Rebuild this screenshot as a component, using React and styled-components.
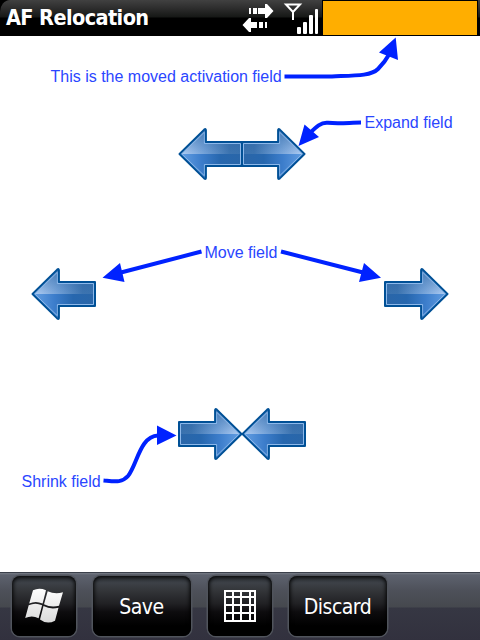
import React from 'react';
import styled, { createGlobalStyle } from 'styled-components';

const GlobalStyle = createGlobalStyle`
  * { box-sizing: border-box; }
  body { margin: 0; background: #fff; }
`;

const Screen = styled.div`
  width: 480px;
  height: 640px;
  display: flex;
  flex-direction: column;
  background: #fff;
  overflow: hidden;
`;

const TitleBar = styled.header`
  flex: none;
  height: 36px;
  display: flex;
  align-items: center;
  padding: 0 2px 0 6px;
  background: #000;
  background-image: linear-gradient(#414141 0, #2b2b2b 9px, #161816 17px, #000 18px);
  border-top-left-radius: 10px 12px;
`;

const TitleBack = styled.div`
  flex: none;
  background: #000;
`;

const Title = styled.h1`
  flex: 1;
  margin: 0;
  font: bold 21.5px/30px 'DejaVu Sans Condensed', 'DejaVu Sans', sans-serif;
  font-stretch: condensed;
  letter-spacing: -0.6px;
  color: #fff;
  white-space: nowrap;
`;

const StatusIcons = styled.svg`
  flex: none;
  width: 80px;
  height: 36px;
`;

const ActivationField = styled.div`
  flex: none;
  width: 156px;
  height: 36px;
  border: 1px solid #000;
  background: #ffae00;
`;

const Canvas = styled.main`
  position: relative;
  flex: 1;
  display: flex;
  flex-direction: column;
  gap: 88px;
  padding-top: 92px;
`;

const ArrowRow = styled.div`
  display: flex;
  flex: none;
  height: 52px;
  justify-content: ${(p) => (p.$spread ? 'space-between' : 'center')};
  padding: ${(p) => (p.$spread ? '0 32px' : '0 0 0 4px')};
`;

const ArrowButton = styled.button`
  flex: none;
  width: 64px;
  height: 52px;
  margin: 0 0 0 ${(p) => p.$overlap || 0}px;
  padding: 0;
  border: 0;
  background: none;
  transform: ${(p) => (p.$right ? 'scaleX(-1)' : 'none')};
  svg { display: block; overflow: visible; }
`;

const Annotations = styled.svg`
  position: absolute;
  inset: 0;
  width: 480px;
  height: 536px;
  pointer-events: none;
`;

const Note = styled.span`
  position: absolute;
  left: ${(p) => p.$x}px;
  top: ${(p) => p.$y}px;
  font: 16px/18px 'Liberation Sans', Arial, sans-serif;
  color: #2a46ff;
  white-space: nowrap;
`;

const MenuBar = styled.footer`
  flex: none;
  height: 68px;
  display: flex;
  gap: 17px;
  padding: 3px 12px 4px;
  border-top: 1px solid #3b404a;
  background: linear-gradient(#777c86 0, #5d626e 2px, #4d5059 18px, #45484e 34px, #363743 35px, #32313e 100%);
`;

const MenuButton = styled.button`
  flex: none;
  width: ${(p) => (p.$wide ? 98 : 64)}px;
  height: 60px;
  display: flex;
  align-items: center;
  justify-content: center;
  padding: ${(p) => (p.$wide ? '1px 1px 0 0' : '0 0 1px')};
  border: 0;
  border-radius: 8px;
  background: linear-gradient(#2b2f34 0, #3d4147 7px, #34363a 14px, #202023 28px, #0d0c0e 36px, #000 50px);
  box-shadow: 0 0 0 1.5px #50545c, inset 0 0 4px 1px #000;
  color: #fff;
  font: 21px/30px 'DejaVu Sans Condensed', 'DejaVu Sans', sans-serif;
  font-stretch: condensed;
  letter-spacing: -0.5px;
`;

function Arrow({ right, overlap }) {
  return (
    <ArrowButton $right={right} $overlap={overlap}>
      <svg width="64" height="52" viewBox="0 0 64 52">
        <defs>
          <linearGradient id="upper" x1="0" y1="0" x2="1" y2="0">
            <stop offset="0" stopColor="#b4d0f5" />
            <stop offset="0.4" stopColor="#74a2d8" />
            <stop offset="0.8" stopColor="#3d74b0" />
            <stop offset="1" stopColor="#3a72af" />
          </linearGradient>
          <linearGradient id="lower" x1="0" y1="0" x2="1" y2="0">
            <stop offset="0" stopColor="#65a0e4" />
            <stop offset="0.35" stopColor="#3c7dcb" />
            <stop offset="0.65" stopColor="#2767ae" />
            <stop offset="1" stopColor="#2a66a8" />
          </linearGradient>
          <linearGradient id="shade" x1="0" y1="0" x2="0" y2="1">
            <stop offset="0" stopColor="#235e9e" stopOpacity="0.6" />
            <stop offset="1" stopColor="#235e9e" stopOpacity="0" />
          </linearGradient>
        </defs>
        <path d="M.8 26 26.6 1.3V14.2H63V38.2H26.6V50.7Z" fill="url(#lower)" />
        <path d="M.8 26 26.6 1.3V14.2H63V26Z" fill="url(#upper)" />
        <path d="M.8 26 26.6 1.3V14.2H63V26Z" fill="url(#shade)" />
        <path d="M2.8 26 25.4 4.2V15.500H61.500V36.500H25.400V47.800Z" fill="none" stroke="#8db8ea" />
        <path d="M.5 26 25.200 1.600Q26.900 .2 26.900 2.300V14H63V38H26.900V49.700Q26.900 51.800 25.200 50.400Z" fill="none" stroke="#005096" strokeWidth="2" strokeLinejoin="round" />
      </svg>
    </ArrowButton>
  );
}

function WindowsFlag() {
  return (
    <svg width="38" height="36" viewBox="0 0 38 36">
      <defs>
        <linearGradient id="flag" x1="0" y1="0" x2="0" y2="36" gradientUnits="userSpaceOnUse">
          <stop offset="0" stopColor="#fff" />
          <stop offset="1" stopColor="#d8d8d8" />
        </linearGradient>
      </defs>
      <g fill="url(#flag)">
        <path d="M8 2.300Q14-.8 21 2.200L17.600 15.400Q10.600 12.400 4.200 15.400Z" />
        <path d="M22.700 3.200Q30 6.800 38 4.300L34 17.800Q26 20 19 16.200Z" />
        <path d="M3.700 17.300Q10.400 14.200 17.100 17.300L13.600 30.200Q7 26.800 .2 30Z" />
        <path d="M18.500 18.100Q25.500 21.800 33.500 19.700L30 32.700Q22 37 15 31.500Z" />
      </g>
    </svg>
  );
}

function GridIcon() {
  return (
    <svg width="32" height="32" viewBox="0 0 32 32" shapeRendering="crispEdges">
      <path d="M1 1H31V31H1ZM9 1V31M17 1V31M26 1V31M1 7H31M1 15H31M1 23H31" fill="none" stroke="#fff" strokeWidth="2" />
    </svg>
  );
}

export default function App() {
  return (
    <Screen>
      <GlobalStyle />
      <TitleBack>
        <TitleBar>
          <Title>AF Relocation</Title>
          <StatusIcons viewBox="242 0 80 36" fill="#fff">
            <path d="M249 8h2v6h-2zM253 8h4v6h-4zM258 8h7V4h2l6.500 7-6.500 7h-2v-4h-7z" />
            <path d="M267 22h-2v6h2zM263 22h-4v6h4zM257 22h-6v-4h-2l-6.500 7 6.500 7h2v-4h6z" />
            <path d="M286 4.500h14L293 12zM293 11v9" fill="none" stroke="#fff" strokeWidth="2" />
            <rect x="297" y="27" width="4" height="7" rx="1" />
            <rect x="303" y="22" width="4" height="12" rx="1" />
            <rect x="309" y="15" width="4" height="19" rx="1" />
            <rect x="315" y="9" width="3" height="25" rx="1" />
          </StatusIcons>
          <ActivationField />
        </TitleBar>
      </TitleBack>
      <Canvas>
        <ArrowRow>
          <Arrow />
          <Arrow right overlap={-2} />
        </ArrowRow>
        <ArrowRow $spread>
          <Arrow />
          <Arrow right />
        </ArrowRow>
        <ArrowRow>
          <Arrow right />
          <Arrow />
        </ArrowRow>
        <Annotations viewBox="0 36 480 536">
          <g fill="none" stroke="#0022ff" strokeWidth="4">
            <path d="M284.500 76.400H332C355 75.500 371 76 378 69Q385 62 390 53" />
            <path d="M361 122.500C350 122.500 340 124 328 122.800C321 122 316 127 310 133" />
            <path d="M201.500 251.500 120 272.800M281 251.500 364 272.800" />
            <path d="M103.500 480.500C115 481.500 122 483 128 476C137 465 140 436 158 435.500" />
          </g>
          <g fill="#0022ff">
            <path d="M395.700 37.500 379 52.500 398 60ZM298.500 146 304.500 124.500 319 137ZM102.500 277.800 120 263 124.500 282ZM381 277.800 364 263 359 282ZM176.500 435.500 157 425.500V445Z" />
          </g>
        </Annotations>
        <Note $x={50.5} $y={32}>This is the moved activation field</Note>
        <Note $x={364.5} $y={78}>Expand field</Note>
        <Note $x={204.5} $y={208}>Move field</Note>
        <Note $x={21.5} $y={437}>Shrink field</Note>
      </Canvas>
      <MenuBar>
        <MenuButton aria-label="Start"><WindowsFlag /></MenuButton>
        <MenuButton $wide>Save</MenuButton>
        <MenuButton aria-label="Keyboard"><GridIcon /></MenuButton>
        <MenuButton $wide>Discard</MenuButton>
      </MenuBar>
    </Screen>
  );
}
